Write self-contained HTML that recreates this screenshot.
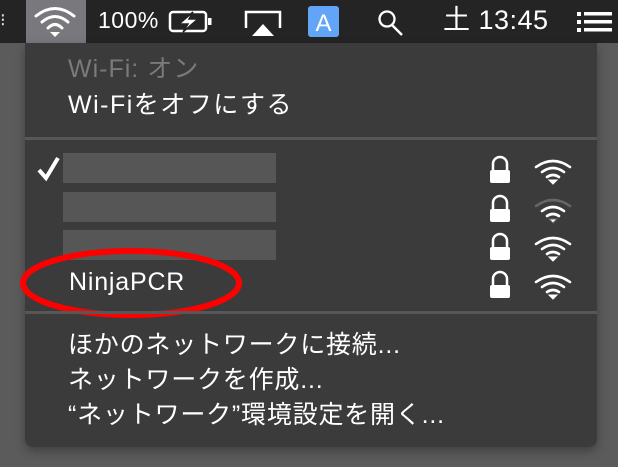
<!DOCTYPE html>
<html><head><meta charset="utf-8"><style>
body{margin:0;width:618px;height:467px;background:#5b5b5b;position:relative;overflow:hidden;font-family:"Liberation Sans","Noto Sans CJK JP",sans-serif;color:#fff}
.bar{position:absolute;left:0;top:0;width:618px;height:43px;background:#242424}
.menu{position:absolute;left:25px;top:43px;width:572px;height:404px;background:#3b3b3b;border-radius:0 0 8px 8px;box-shadow:0 4px 10px rgba(0,0,0,.3)}
.t{position:absolute;font-size:25px;white-space:nowrap;line-height:1}
.sep{position:absolute;left:25px;width:572px;height:3px;background:#575757}
.box{position:absolute;left:63px;width:213px;height:30px;background:#565656}
svg{position:absolute}
</style></head><body>
<div class="bar"></div>
<div style="position:absolute;left:26px;top:0;width:60px;height:43px;background:#79787d"></div>
<div style="position:absolute;left:0;top:10px;color:#ddd;font-size:18px">⁝</div>
<svg width="618" height="43" style="left:0;top:0">
<g fill="none" stroke="#fff" stroke-width="3" stroke-linecap="round">
<path d="M36 16 Q55 1 74 16"/><path d="M42 22 Q55 11 68 22"/><path d="M48 28 Q55 21 62 28"/>
</g><path d="M50 32 L55 37 L60 32 Z" fill="#fff"/>
<rect x="170" y="12" width="36" height="19" rx="3" fill="none" stroke="#fff" stroke-width="2.5"/>
<rect x="208" y="18" width="3.5" height="7" fill="#fff"/>
<path d="M193 12 L179 24 L188 24 L183 32 L198 19 L189 19 Z" fill="#fff" stroke="#242424" stroke-width="1.5"/>
<path d="M246 28 L246 12 L280 12 L280 28" fill="none" stroke="#fff" stroke-width="2.5"/>
<path d="M252 36 L263 24 L274 36 Z" fill="#fff"/>
<rect x="308" y="6" width="31" height="31" rx="3" fill="#62a4f6"/>
<text x="323.5" y="31" text-anchor="middle" font-size="24" fill="#fff" font-family="Liberation Sans">A</text>
<circle cx="387" cy="19" r="7.5" fill="none" stroke="#fff" stroke-width="2.3"/>
<path d="M392 25 L402 35" stroke="#fff" stroke-width="2.5"/>
<g fill="#fff"><rect x="577" y="12" width="4" height="4"/><rect x="584" y="12" width="28" height="3.5"/><rect x="577" y="20" width="4" height="4"/><rect x="584" y="20" width="28" height="3.5"/><rect x="577" y="28" width="4" height="4"/><rect x="584" y="28" width="28" height="3.5"/></g>
</svg>
<div class="t" style="left:98px;top:9px;font-size:23px;letter-spacing:0.5px">100%</div>
<div class="t" style="left:443px;top:7px;font-size:27px;letter-spacing:0.5px">土 13:45</div>
<div class="menu"></div>
<div class="t" style="left:68px;top:57px;color:#7a7a7a;letter-spacing:1px">Wi-Fi: オン</div>
<div class="t" style="left:68px;top:93px;letter-spacing:1.5px">Wi-Fiをオフにする</div>
<div class="sep" style="top:137px"></div>
<div class="box" style="top:153px"></div>
<div class="box" style="top:192px"></div>
<div class="box" style="top:230px"></div>
<svg width="30" height="30" style="left:36px;top:155px"><path d="M3 15 L10 23 L22 3" fill="none" stroke="#fff" stroke-width="4"/></svg>
<div class="t" style="left:69px;top:270px;font-size:25px;letter-spacing:0.8px">NinjaPCR</div>
<svg width="618" height="467" style="left:0;top:0">
<defs><g id="lk"><path d="M3 14 V7 A7 7 0 0 1 17 7 V14" fill="none" stroke="#fff" stroke-width="2.5"/><rect x="0" y="13" width="20" height="13" rx="2" fill="#fff"/></g>
<g id="wf"><g fill="none" stroke-width="2.6" stroke-linecap="round"><path d="M2 9 Q19 -3 36 9"/><path d="M8 14 Q19 6 30 14" stroke="#fff"/><path d="M13 19 Q19 15 25 19" stroke="#fff"/></g><path d="M15 22 L19 26 L23 22 Z" fill="#fff"/></g></defs>
<use href="#lk" x="490" y="157"/><use href="#lk" x="490" y="196"/><use href="#lk" x="490" y="234"/><use href="#lk" x="490" y="272"/>
<g stroke="#fff"><use href="#wf" x="534" y="158"/></g>
<g stroke="#666"><use href="#wf" x="534" y="197"/></g>
<g stroke="#fff"><use href="#wf" x="534" y="235"/></g>
<g stroke="#fff"><use href="#wf" x="534" y="273"/></g>
<ellipse cx="131" cy="283" rx="108" ry="32" fill="none" stroke="#f00" stroke-width="6"/>
</svg>
<div class="sep" style="top:311px"></div>
<div class="t" style="left:68px;top:333px;letter-spacing:0.8px">ほかのネットワークに接続...</div>
<div class="t" style="left:68px;top:368px;letter-spacing:0.8px">ネットワークを作成...</div>
<div class="t" style="left:68px;top:403px;letter-spacing:0.8px">“ネットワーク”環境設定を開く...</div>
</body></html>
